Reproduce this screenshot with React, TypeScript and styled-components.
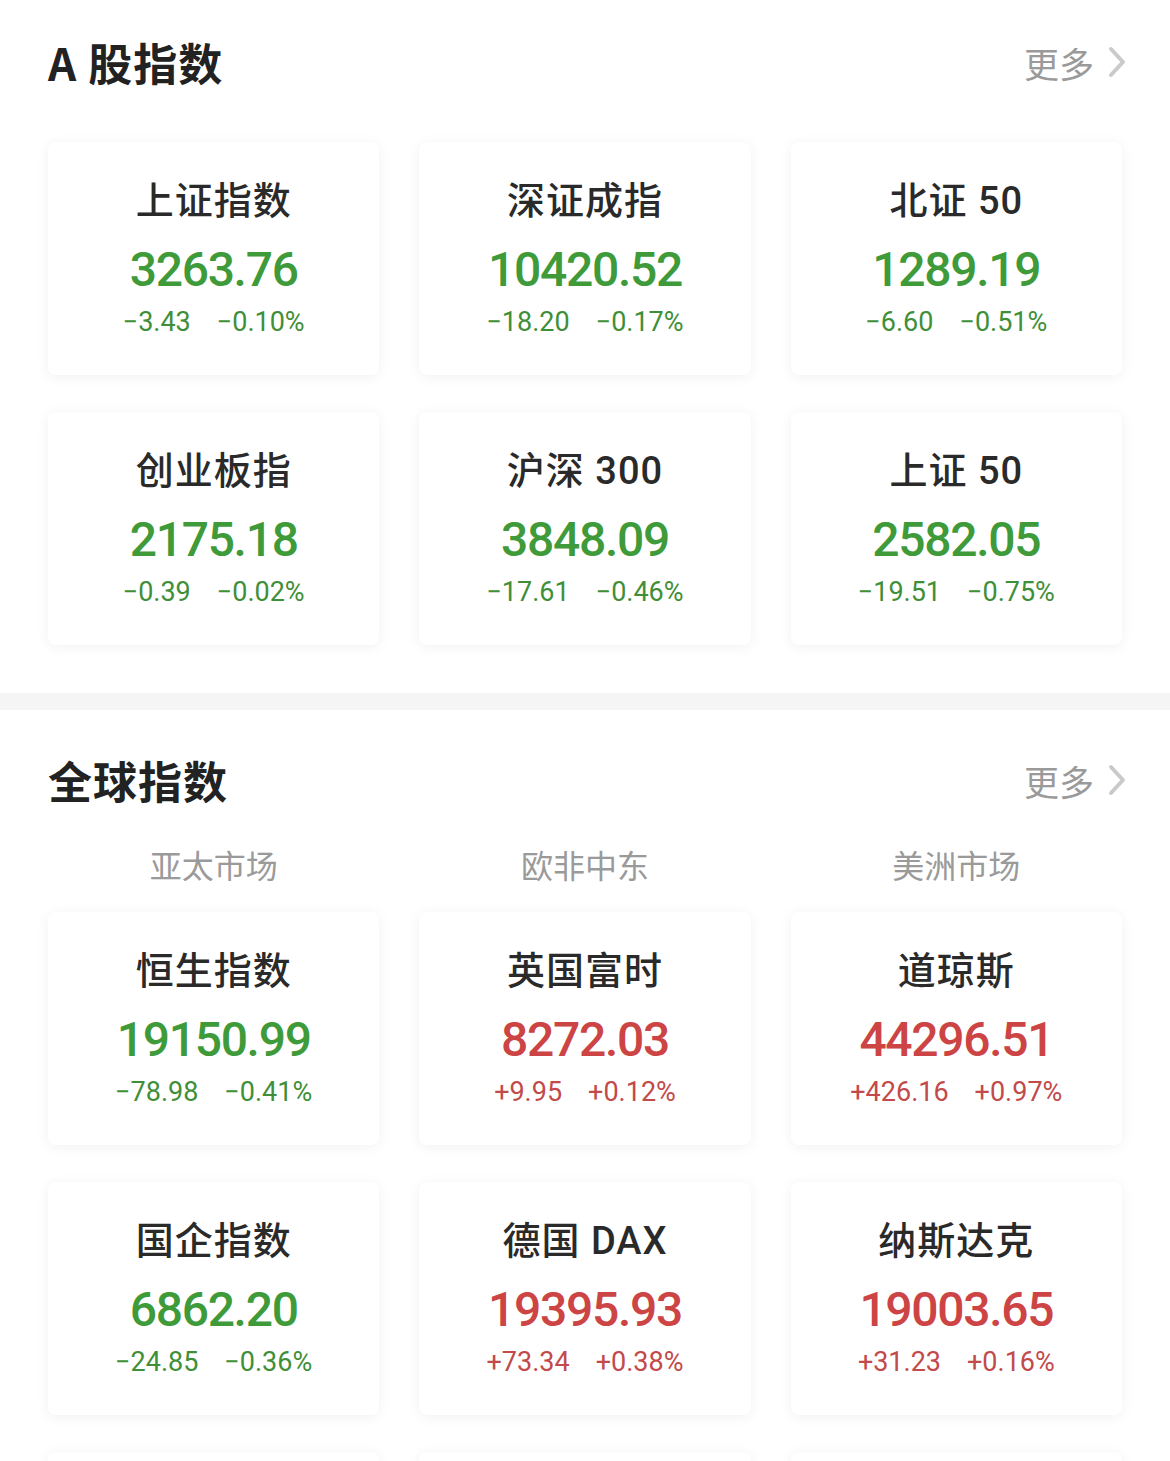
import React from 'react';
import styled, { createGlobalStyle } from 'styled-components';

const GlobalStyle = createGlobalStyle`
  body {
    margin: 0;
    background: #fff;
    font-family: Roboto, "Noto Sans CJK SC", sans-serif;
  }
`

const Page = styled.div`
  width: 1170px;
  height: 1461px;
  overflow: hidden;
  background: #fff;
`

const Section = styled.section`
  padding: 0 48px 48px;
`

const Header = styled.div<{ $top?: number; $height: number }>`
  height: ${p => p.$height}px;
  padding-top: ${p => p.$top ?? 0}px;
  display: flex;
  align-items: center;
  justify-content: space-between;
`

const Title = styled.h2`
  margin: 0;
  font-family: "Noto Sans CJK SC", sans-serif;
  font-size: 44px;
  font-weight: 700;
  color: #222;
  letter-spacing: 1px;
`

const More = styled.div`
  display: flex;
  align-items: center;
  gap: 12px;
  margin-right: -6px;
  color: #9a9a9a;
  font-family: "Noto Sans CJK SC", sans-serif;
  font-size: 35px;
`

const Grid = styled.div<{ $top: number }>`
  display: grid;
  grid-template-columns: repeat(3, 1fr);
  column-gap: 40px;
  row-gap: 37px;
  margin-top: ${p => p.$top}px;
`

const Card = styled.div`
  height: 233px;
  box-sizing: border-box;
  padding-top: 37px;
  border-radius: 8px;
  background: #fff;
  box-shadow: 0 2px 14px rgba(0, 0, 0, 0.06);
  display: flex;
  flex-direction: column;
  align-items: center;
`

const Name = styled.div`
  font-family: Roboto, "Noto Sans CJK SC", sans-serif;
  font-size: 38px;
  line-height: 44px;
  font-weight: 500;
  color: #2a2a2a;
  letter-spacing: 1px;
  white-space: pre;
`

const Value = styled.div<{ $up: boolean }>`
  margin-top: 19px;
  font-size: 48px;
  line-height: 56px;
  font-weight: 500;
  letter-spacing: -1.3px;
  color: ${p => (p.$up ? '#cc4444' : '#3f9a3a')};
`

const Change = styled.div<{ $up: boolean }>`
  margin-top: 8px;
  display: flex;
  gap: 26px;
  font-size: 27px;
  line-height: 32px;
  color: ${p => (p.$up ? '#c24a4a' : '#3f8f38')};
`

const Band = styled.div`
  height: 17px;
  background: #f5f5f5;
`

const Tabs = styled.div`
  display: grid;
  grid-template-columns: repeat(3, 1fr);
  column-gap: 40px;
  padding-top: 10px;
`

const Tab = styled.div`
  text-align: center;
  font-family: "Noto Sans CJK SC", sans-serif;
  font-size: 32px;
  line-height: 40px;
  height: 40px;
  color: #9a9a9a;
`

const Chevron = () => (
  <svg width="22" height="34" viewBox="0 0 22 34" fill="none">
    <path d="M5 4l12 13L5 30" stroke="#cacaca" strokeWidth="4" strokeLinecap="round" strokeLinejoin="round" />
  </svg>
)

type Idx = { name: string; value: string; chg: string; pct: string }

const aShares: Idx[] = [
  { name: '上证指数', value: '3263.76', chg: '-3.43', pct: '-0.10%' },
  { name: '深证成指', value: '10420.52', chg: '-18.20', pct: '-0.17%' },
  { name: '北证 50', value: '1289.19', chg: '-6.60', pct: '-0.51%' },
  { name: '创业板指', value: '2175.18', chg: '-0.39', pct: '-0.02%' },
  { name: '沪深 300', value: '3848.09', chg: '-17.61', pct: '-0.46%' },
  { name: '上证 50', value: '2582.05', chg: '-19.51', pct: '-0.75%' },
]

const globalIdx: Idx[] = [
  { name: '恒生指数', value: '19150.99', chg: '-78.98', pct: '-0.41%' },
  { name: '英国富时', value: '8272.03', chg: '+9.95', pct: '+0.12%' },
  { name: '道琼斯', value: '44296.51', chg: '+426.16', pct: '+0.97%' },
  { name: '国企指数', value: '6862.20', chg: '-24.85', pct: '-0.36%' },
  { name: '德国 DAX', value: '19395.93', chg: '+73.34', pct: '+0.38%' },
  { name: '纳斯达克', value: '19003.65', chg: '+31.23', pct: '+0.16%' },
  { name: '', value: '', chg: '', pct: '' },
  { name: '', value: '', chg: '', pct: '' },
  { name: '', value: '', chg: '', pct: '' },
]

const IndexCard = ({ item }: { item: Idx }) => {
  const up = item.chg.startsWith('+')
  return (
    <Card>
      <Name>{item.name}</Name>
      <Value $up={up}>{item.value}</Value>
      <Change $up={up}>
        <span>{item.chg.replace('-', '−')}</span>
        <span>{item.pct.replace('-', '−')}</span>
      </Change>
    </Card>
  )
}

export default function App() {
  return (
    <Page>
      <GlobalStyle />
      <Section>
        <Header $height={124}>
          <Title>A 股指数</Title>
          <More>更多<Chevron /></More>
        </Header>
        <Grid $top={18}>
          {aShares.map(i => <IndexCard key={i.name} item={i} />)}
        </Grid>
      </Section>
      <Band />
      <Section>
        <Header $top={16} $height={108}>
          <Title>全球指数</Title>
          <More>更多<Chevron /></More>
        </Header>
        <Tabs>
          <Tab>亚太市场</Tab>
          <Tab>欧非中东</Tab>
          <Tab>美洲市场</Tab>
        </Tabs>
        <Grid $top={28}>
          {globalIdx.map((i, n) => <IndexCard key={n} item={i} />)}
        </Grid>
      </Section>
    </Page>
  )
}
